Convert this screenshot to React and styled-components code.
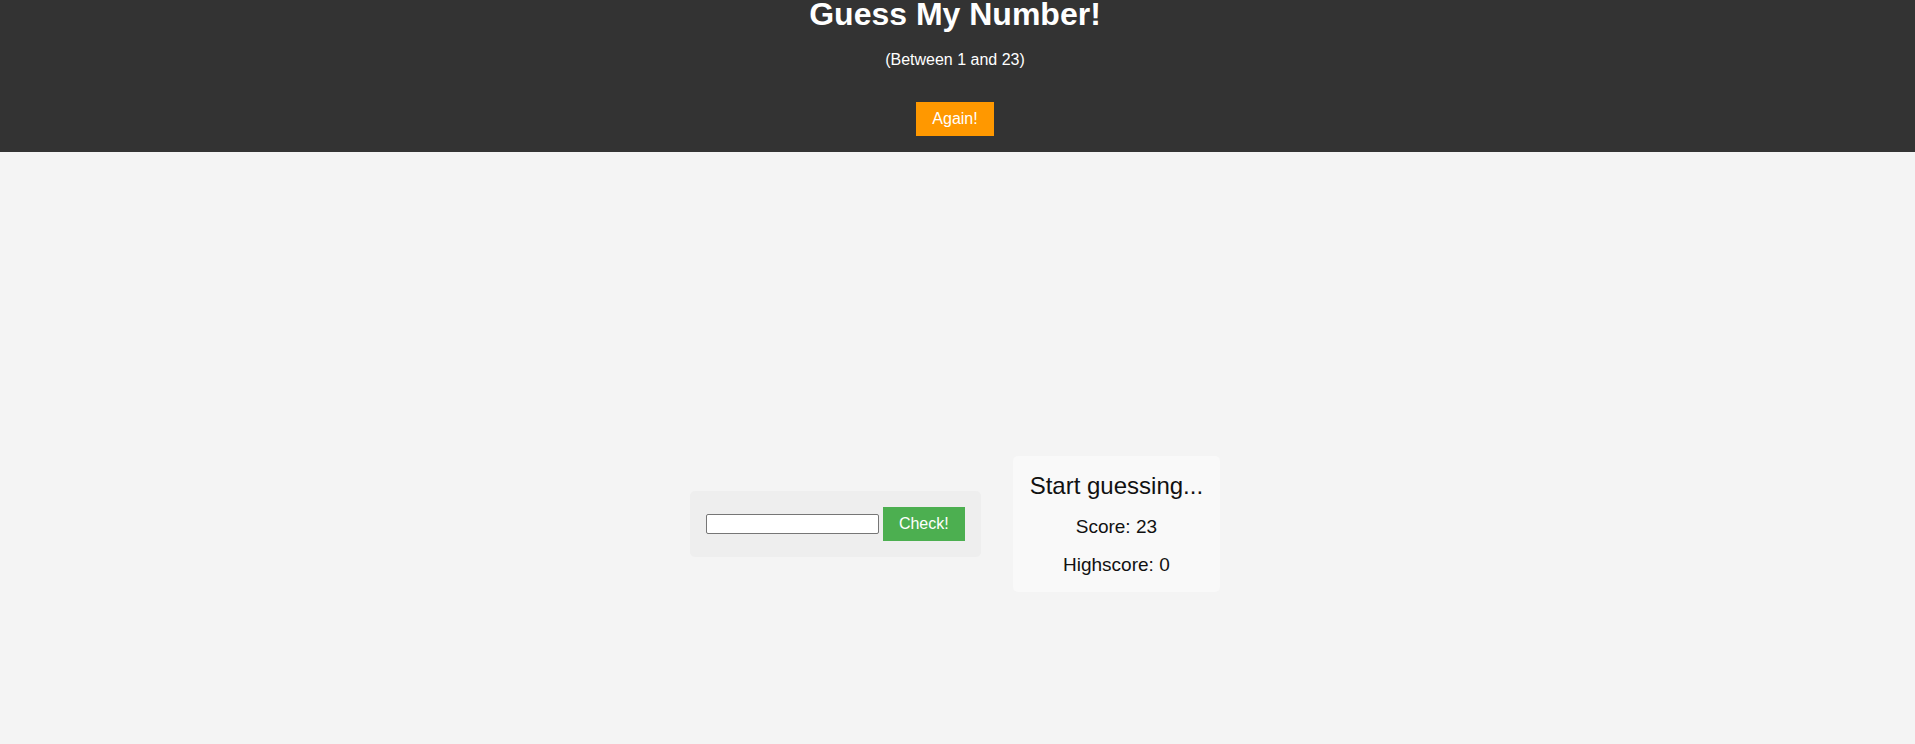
import { useState } from "react";
import styled, { createGlobalStyle } from "styled-components";

const GlobalStyle = createGlobalStyle`
  body {
    margin: 0;
    background: #f4f4f4;
    font-family: "Liberation Sans", Arial, sans-serif;
  }
`;

function App() {
  const [guess, setGuess] = useState("");
  const [score] = useState(23);
  const [highscore] = useState(0);

  return (
    <>
      <GlobalStyle />
      <Header>
        <h1>Guess My Number!</h1>
        <p>(Between 1 and 23)</p>
        <Button $color="#ff9800">Again!</Button>
      </Header>
      <Main>
        <GuessBox>
          <input
            type="number"
            value={guess}
            onChange={(e) => setGuess(e.target.value)}
          />
          <Button $color="#4caf50">Check!</Button>
        </GuessBox>
        <ResultBox>
          <p className="message">Start guessing...</p>
          <p>Score: {score}</p>
          <p>Highscore: {highscore}</p>
        </ResultBox>
      </Main>
    </>
  );
}

const Header = styled.header`
  background: #333;
  color: #fff;
  text-align: center;
  padding-bottom: 16px;
  padding-right: 5px;
  h1 {
    font-size: 32px;
    font-weight: 700;
    margin: -4px 0 0;
  }
  p {
    font-size: 16px;
    margin: 18px 0 33px;
  }
`;

const Button = styled.button`
  background: ${(p) => p.$color};
  color: #fff;
  border: none;
  border-radius: 0;
  padding: 8px 16px;
  font-family: inherit;
  font-size: 16px;
  cursor: pointer;
`;

const Main = styled.main`
  height: 100vh;
  display: flex;
  align-items: center;
  justify-content: center;
  gap: 32px;
  padding-right: 5px;
`;

const GuessBox = styled.div`
  display: flex;
  align-items: center;
  gap: 4px;
  background: #eee;
  border-radius: 5px;
  padding: 16px;
  input {
    box-sizing: border-box;
    width: 173px;
    height: 20px;
    padding: 1px 2px;
    border: 1px solid #767676;
    border-radius: 2px;
    background: #fff;
    font-size: 13px;
    -moz-appearance: textfield;
  }
  input::-webkit-outer-spin-button,
  input::-webkit-inner-spin-button {
    -webkit-appearance: none;
    margin: 0;
  }
`;

const ResultBox = styled.div`
  display: flex;
  flex-direction: column;
  align-items: center;
  gap: 16px;
  background: #f9f9f9;
  border-radius: 5px;
  padding: 16px 17px;
  white-space: nowrap;
  p {
    margin: 0;
    font-size: 19px;
    color: #111;
  }
  .message {
    font-size: 24px;
  }
`;

export default App;
